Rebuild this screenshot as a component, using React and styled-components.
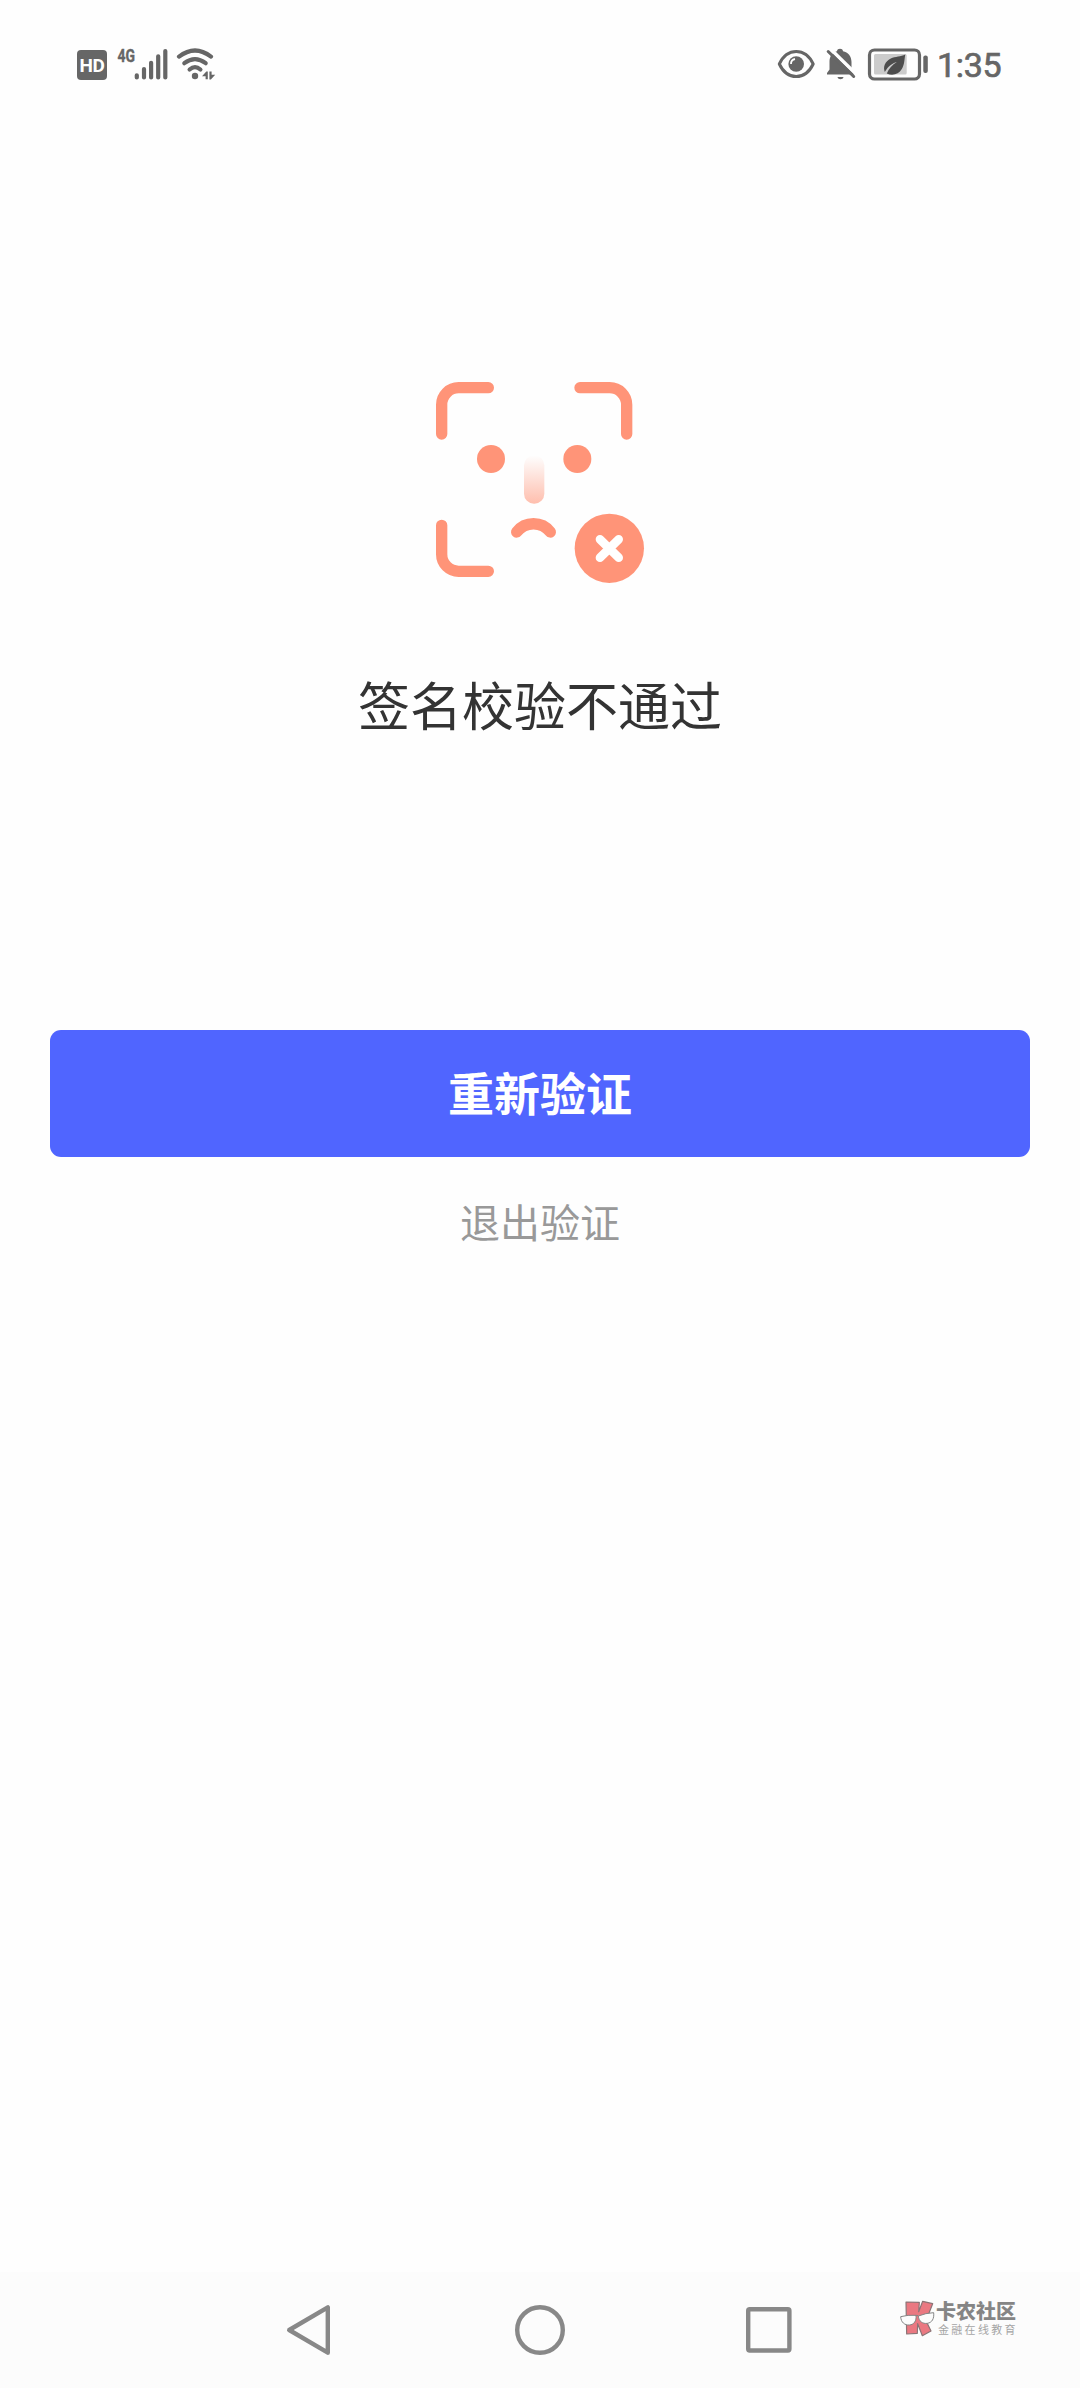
import React from "react";
import styled, { createGlobalStyle } from "styled-components";

const GlobalStyle = createGlobalStyle`
  * {
    box-sizing: border-box;
  }
  body {
    margin: 0;
    background: #fefefe;
    font-family: Roboto, "Noto Sans CJK SC", sans-serif;
  }
`;

export default function App() {
  return (
    <>
      <GlobalStyle />
      <Screen>
        <StatusBar />
        <Content>
          <FaceFailIcon />
          <Title>签名校验不通过</Title>
          <RetryButton>重新验证</RetryButton>
          <ExitButton>退出验证</ExitButton>
        </Content>
        <NavBar />
      </Screen>
    </>
  );
}

function StatusBar() {
  return (
    <StatusWrapper>
      <StatusGroup>
        <HdBadge>HD</HdBadge>
        <NetworkIcon />
        <SignalIcon />
        <WifiIcon />
      </StatusGroup>
      <StatusGroup>
        <EyeIcon />
        <BellOffIcon />
        <BatteryIcon />
        <Clock>1:35</Clock>
      </StatusGroup>
    </StatusWrapper>
  );
}

function NetworkIcon() {
  return (
    <NetworkLabel width="17" height="36" viewBox="117 46 17 36">
      <text x="117.5" y="62" textLength="17.5" lengthAdjust="spacingAndGlyphs">
        4G
      </text>
    </NetworkLabel>
  );
}

function SignalIcon() {
  return (
    <Icon width="34" height="36" viewBox="134 46 34 36">
      <g stroke="#666" strokeWidth="4.2" strokeLinecap="round">
        <path d="M136.8 75.3v2.1M144 69v8.4M151.1 62.8v14.6M158.2 56.3v21.1M165.3 51v26.4" />
      </g>
    </Icon>
  );
}

function WifiIcon() {
  return (
    <Icon width="42" height="36" viewBox="176 46 42 36">
      <g fill="none" stroke="#666" strokeWidth="4.2" strokeLinecap="round">
        <path d="M179 56.6Q195 44.4 211 56.6" />
        <path d="M184.3 63.2Q195 55 205.7 63.2" />
        <path d="M189.6 69.5Q195 64.7 200.4 69.5" />
      </g>
      <circle cx="195" cy="76" r="3.2" fill="#666" />
      <path d="M202 76.2l4.3-4.7h1.5v7.8h-2.2v-3.1zM215.2 74.8l-4.3 4.6h-1.5v-7.9h2.2v3.3z" fill="#666" />
    </Icon>
  );
}

function EyeIcon() {
  return (
    <Icon width="40" height="36" viewBox="776 46 40 36">
      <path
        d="M779.3 64C783 56.2 789 51.5 796.2 51.5S809.5 56.2 813.2 64C809.5 71.8 803.4 76.5 796.2 76.5S783 71.8 779.3 64z"
        fill="none"
        stroke="#666"
        strokeWidth="3"
        strokeLinejoin="round"
      />
      <circle cx="796.2" cy="64" r="7.8" fill="#666" />
      <path d="M791 64a5 5 0 0 1 4-5" fill="none" stroke="#fefefe" strokeWidth="1.8" />
    </Icon>
  );
}

function BellOffIcon() {
  return (
    <Icon width="34" height="36" viewBox="824 46 34 36">
      <path
        d="M829.5 61.5c0-5 3-9.300 7.500-10.300 0-3.300 6-3.300 6 0 5 1 8.500 5 8.500 10.800v8l3 3.500v1H827v-1.500l2.500-3.500z"
        fill="#666"
      />
      <path d="M837.5 77h6c-.5 3-5.500 3-6 0z" fill="#666" />
      <path d="M829.5 48l28 27.500" stroke="#fefefe" strokeWidth="3.4" />
      <path d="M828.2 51.500l25.500 25" stroke="#666" strokeWidth="3" strokeLinecap="round" />
    </Icon>
  );
}

function BatteryIcon() {
  return (
    <Icon width="62" height="36" viewBox="866 46 62 36">
      <rect x="869.5" y="50" width="50" height="29" rx="5" fill="none" stroke="#666" strokeWidth="3.2" />
      <rect x="874" y="54" width="32.7" height="20.5" rx="1.5" fill="#ccc" />
      <rect x="923.3" y="55.5" width="4.5" height="17.5" rx="2" fill="#666" />
      <path
        d="M905.3 54.5c-4.500 2.500-10 1.800-14.500 4-6 3-8 8.500-6 13.500 3.500-6 7.500-8.500 12-10-4.500 3-8 6.500-10 11.500 6 2.800 12 .5 15-4.500 3-5 2.500-10 3.500-14.500z"
        fill="#4d4d4d"
      />
    </Icon>
  );
}

function FaceFailIcon() {
  return (
    <FaceDrawing viewBox="0 0 720 720">
      <defs>
        <linearGradient id="nose" x1="0" y1="0" x2="0" y2="1">
          <stop offset="0" stopColor="#ff9478" stopOpacity="0" />
          <stop offset="1" stopColor="#ff9478" stopOpacity="0.6" />
        </linearGradient>
      </defs>
      <g fill="none" stroke="#ff9478" strokeWidth="34" strokeLinecap="round">
        <path d="M65 222V134A51 51 0 0 1 116 83H205" />
        <path d="M480 83H569A51 51 0 0 1 620 134V222" />
        <path d="M65 496V583A51 51 0 0 0 116 634H205" />
        <path d="M290 516A64 64 0 0 1 391 516" />
      </g>
      <circle cx="213" cy="297" r="42" fill="#ff9478" />
      <circle cx="472" cy="297" r="42" fill="#ff9478" />
      <rect x="312" y="286" width="61" height="145" rx="30" fill="url(#nose)" />
      <circle cx="568" cy="565" r="104" fill="#ff9478" />
      <path d="M540 538l56 55M596 538l-56 55" stroke="#fff" strokeWidth="26" strokeLinecap="round" />
    </FaceDrawing>
  );
}

function NavBar() {
  return (
    <NavWrapper>
      <NavButton aria-label="back">
        <NavIcon viewBox="0 0 60 60">
          <path d="M47.8 7.3v45.4L9.2 30z" />
        </NavIcon>
      </NavButton>
      <NavButton aria-label="home">
        <NavIcon viewBox="0 0 60 60">
          <circle cx="30" cy="30" r="22.8" />
        </NavIcon>
      </NavButton>
      <NavButton aria-label="recent">
        <NavIcon viewBox="0 0 60 60">
          <rect x="8.2" y="9.3" width="41.2" height="41.2" rx="1.5" />
        </NavIcon>
      </NavButton>
      <Watermark>
        <BrandLogo />
        <BrandText>
          <BrandName>卡农社区</BrandName>
          <BrandSlogan>金融在线教育</BrandSlogan>
        </BrandText>
      </Watermark>
    </NavWrapper>
  );
}

function BrandLogo() {
  return (
    <svg width="36" height="38" viewBox="0 0 108 114">
      <path
        d="M21 6l40 1-2 28 12-31 30 7-20 51 15 31-26 14-14-36-1 29-32 2z"
        fill="#ea7881"
        stroke="#8b7476"
        strokeWidth="3.5"
        strokeLinejoin="round"
      />
      <g fill="#fcfcfc" stroke="#858585" strokeWidth="3" strokeLinejoin="round">
        <path d="M5 50q22-6 46-4c2 17-6 28-20 29S6 67 5 50z" />
        <path d="M58 48q22-9 46-10c2 18-5 30-19 32s-26-6-27-22z" />
        <path d="M50 47q4-3 8 1" fill="none" />
      </g>
    </svg>
  );
}

const Screen = styled.div`
  display: flex;
  flex-direction: column;
  width: 1080px;
  height: 2388px;
  background: #fefefe;
`;

const StatusWrapper = styled.header`
  display: flex;
  justify-content: space-between;
  height: 128px;
  padding: 46px 77px 0;
  color: #666;
`;

const StatusGroup = styled.div`
  display: flex;
  align-items: flex-start;
  height: 36px;
`;

const Icon = styled.svg`
  display: block;
  flex: none;
  margin-right: 8px;
`;

const HdBadge = styled.span`
  width: 30px;
  height: 30px;
  margin: 4px 10px 0 0;
  border-radius: 4px;
  background: #666;
  color: #fefefe;
  font-size: 19px;
  font-weight: 700;
  letter-spacing: -0.5px;
  line-height: 31px;
  text-align: center;
`;

const NetworkLabel = styled.svg`
  display: block;
  overflow: visible;
  fill: #666;
  stroke: #666;
  stroke-width: 0.4;
  font-size: 19px;
  font-weight: 700;
`;

const Clock = styled.span`
  width: 67px;
  padding-left: 1px;
  font-size: 34px;
  font-weight: 400;
  letter-spacing: -0.3px;
  line-height: 38px;
  white-space: nowrap;
  -webkit-text-stroke: 0.7px #666;
`;

const Content = styled.main`
  display: flex;
  flex: 1;
  flex-direction: column;
  align-items: center;
  padding: 232px 50px 0;
`;

const FaceDrawing = styled.svg`
  width: 240px;
  height: 240px;
`;

const Title = styled.h1`
  margin: 69px 0 0;
  color: #333;
  font-size: 52px;
  font-weight: 400;
  line-height: 80px;
`;

const RetryButton = styled.button`
  width: 100%;
  height: 127px;
  margin-top: 281px;
  padding: 0 0 6px;
  border: 0;
  border-radius: 11px;
  background: #5065ff;
  color: #fff;
  font-family: inherit;
  font-size: 46px;
  font-weight: 700;
`;

const ExitButton = styled.button`
  margin-top: 38px;
  padding: 0;
  border: 0;
  background: none;
  color: #999;
  font-family: inherit;
  font-size: 40px;
  line-height: 60px;
`;

const NavWrapper = styled.nav`
  position: relative;
  display: flex;
  justify-content: center;
  height: 116px;
  background: #fcfcfc;
`;

const NavButton = styled.button`
  display: flex;
  align-items: center;
  justify-content: center;
  width: 230px;
  padding: 0;
  border: 0;
  background: none;
`;

const NavIcon = styled.svg`
  width: 60px;
  height: 60px;
  fill: none;
  stroke: #888;
  stroke-width: 4.4;
  stroke-linejoin: round;
`;

// sits over the right end of the navigation bar
const Watermark = styled.div`
  position: absolute;
  top: 28px;
  right: 60px;
  display: flex;
  width: 121px;
`;

const BrandText = styled.div`
  display: flex;
  flex: 1;
  flex-direction: column;
  padding-left: 1px;
  white-space: nowrap;
`;

const BrandName = styled.span`
  color: #858585;
  font-size: 20px;
  font-weight: 900;
  line-height: 25px;
`;

const BrandSlogan = styled.span`
  padding-left: 2px;
  color: #a5a5a5;
  font-size: 11px;
  letter-spacing: 2.3px;
  line-height: 11px;
`;
